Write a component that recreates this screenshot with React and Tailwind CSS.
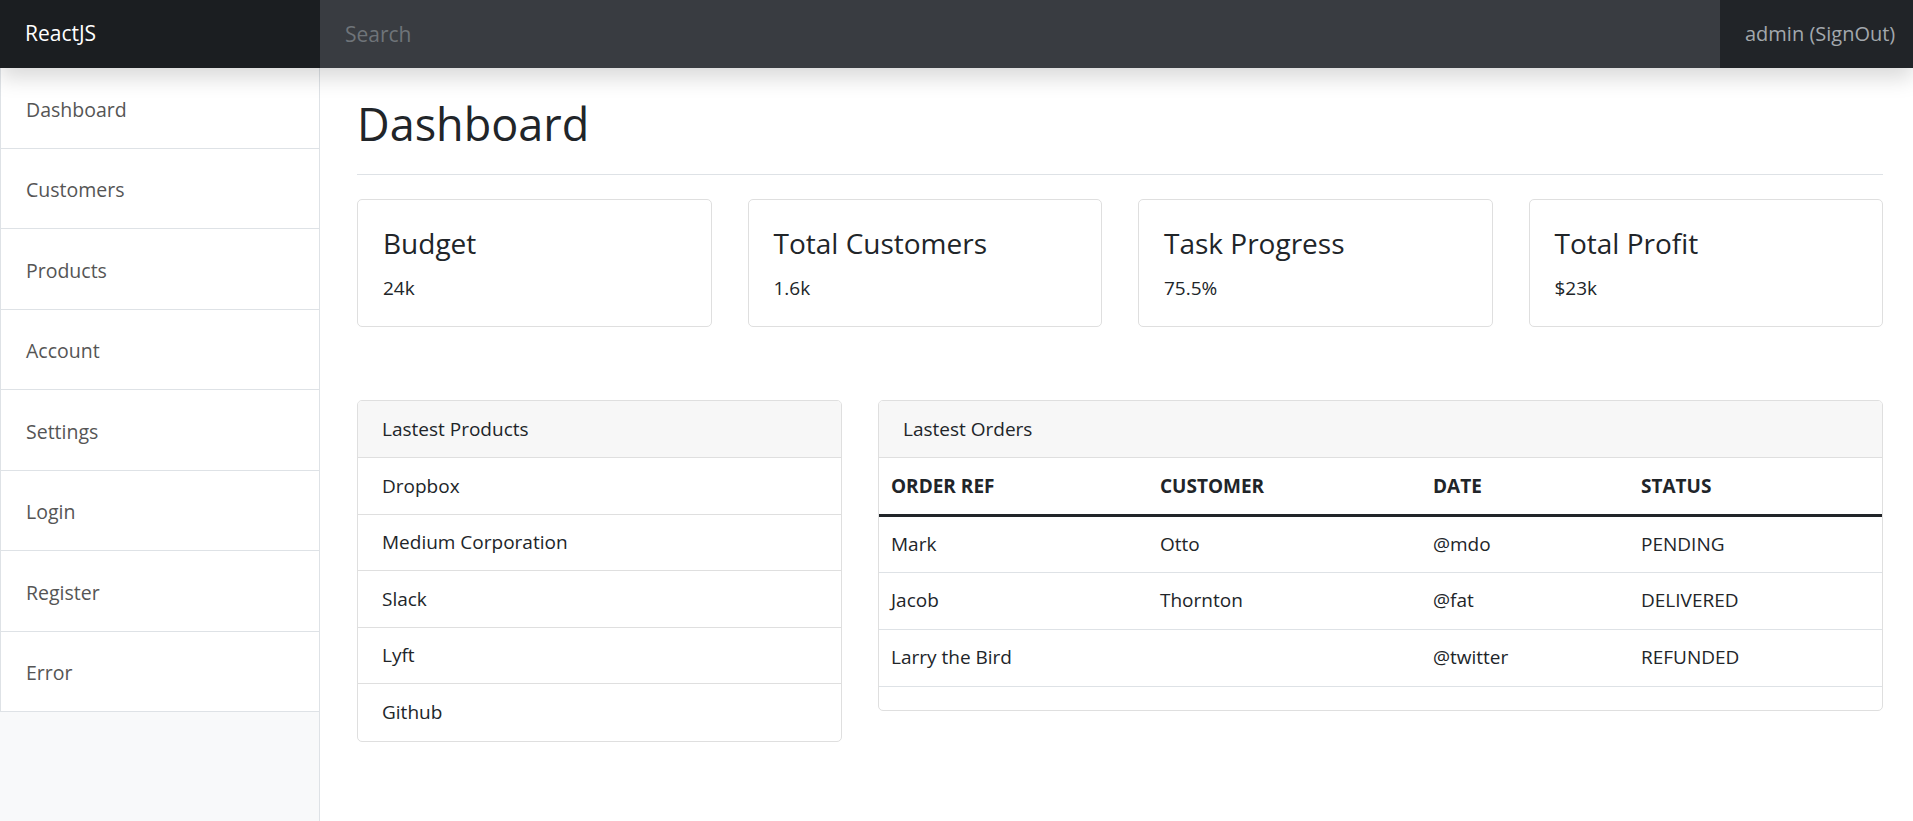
import React from 'react';

const navItems = ['Dashboard', 'Customers', 'Products', 'Account', 'Settings', 'Login', 'Register', 'Error'];

const stats = [
  { title: 'Budget', value: '24k' },
  { title: 'Total Customers', value: '1.6k' },
  { title: 'Task Progress', value: '75.5%' },
  { title: 'Total Profit', value: '$23k' },
];

const products = ['Dropbox', 'Medium Corporation', 'Slack', 'Lyft', 'Github'];

const orders = [
  ['Mark', 'Otto', '@mdo', 'PENDING'],
  ['Jacob', 'Thornton', '@fat', 'DELIVERED'],
  ['Larry the Bird', '', '@twitter', 'REFUNDED'],
];

export default function App() {
  return (
    <div className="h-screen flex flex-col bg-white text-[#212529] overflow-hidden" style={{ fontFamily: '"Open Sans", "Noto Sans", sans-serif' }}>
      {/* top navbar */}
      <header className="h-[68px] shrink-0 flex relative z-10 shadow-[0_10px_20px_rgba(0,0,0,0.15)]">
        <div className="w-[320px] bg-[#1b1e21] flex items-center pl-[25px] text-white text-[21px]">ReactJS</div>
        <div className="flex-1 bg-[#393c41] flex items-center">
          <input
            className="w-full h-full bg-transparent pl-[25px] text-[21px] text-white placeholder:text-[#6f7479] outline-none"
            placeholder="Search"
          />
        </div>
        <div className="w-[193px] bg-[#212428] flex items-center pl-[25px] text-[20px] text-[#a3a8ad]">admin (SignOut)</div>
      </header>

      <div className="flex-1 flex min-h-0">
        {/* sidebar */}
        <aside className="w-[320px] shrink-0 bg-[#f8f9fa] border-r border-[#dee2e6]">
          {navItems.map((item) => (
            <div key={item} className="h-[80.5px] bg-white border-b border-l border-[#dee2e6] flex items-center pl-[25px] pt-[3px] text-[19.5px] text-[#555]">
              {item}
            </div>
          ))}
        </aside>

        {/* main */}
        <main className="flex-1 pl-[37px] pr-[30px] pt-[28px]">
          <div className="border-b border-[#dee2e6] pb-[22px]">
            <h1 className="text-[45px] leading-[56px] font-normal">Dashboard</h1>
          </div>

          <div className="grid grid-cols-4 gap-[36px] mt-[24px]">
            {stats.map((s) => (
              <div key={s.title} className="h-[128px] border border-[#dfdfdf] rounded-[5px] px-[25px] pt-[24px]">
                <div className="text-[28px] leading-[38px] mb-[11px]">{s.title}</div>
                <div className="text-[19px] leading-[30px]">{s.value}</div>
              </div>
            ))}
          </div>

          <div className="flex items-start gap-[36px] mt-[73px]">
            <div className="w-[485px] border border-[#dfdfdf] rounded-[5px] overflow-hidden">
              <div className="h-[57px] bg-[#f7f7f7] border-b border-[#dfdfdf] flex items-center pl-[24px] text-[19px]">Lastest Products</div>
              {products.map((p, i) => (
                <div key={p} className={`h-[56.5px] flex items-center pl-[24px] text-[19px] ${i < products.length - 1 ? 'border-b border-[#dfdfdf]' : ''}`}>
                  {p}
                </div>
              ))}
            </div>

            <div className="flex-1 border border-[#dfdfdf] rounded-[5px] overflow-hidden pb-[23px]">
              <div className="h-[57px] bg-[#f7f7f7] border-b border-[#dfdfdf] flex items-center pl-[24px] text-[19px]">Lastest Orders</div>
              <table className="w-full text-left text-[19px]">
                <thead>
                  <tr className="h-[57px] border-b-[3px] border-[#212529]">
                    <th className="w-[269px] pl-[12px] font-bold">ORDER REF</th>
                    <th className="w-[273px] pl-[12px] font-bold">CUSTOMER</th>
                    <th className="w-[208px] pl-[12px] font-bold">DATE</th>
                    <th className="pl-[12px] font-bold">STATUS</th>
                  </tr>
                </thead>
                <tbody>
                  {orders.map((row) => (
                    <tr key={row[0]} className="h-[57px] border-b border-[#dee2e6]">
                      {row.map((cell, j) => (
                        <td key={j} className="pl-[12px]">{cell}</td>
                      ))}
                    </tr>
                  ))}
                </tbody>
              </table>
            </div>
          </div>
        </main>
      </div>
    </div>
  );
}
